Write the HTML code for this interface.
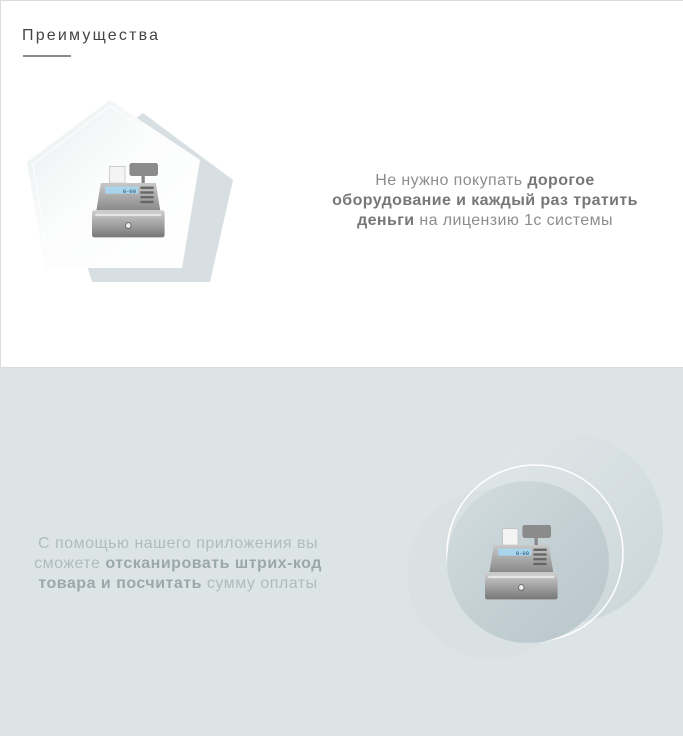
<!DOCTYPE html>
<html><head><meta charset="utf-8"><style>
*{margin:0;padding:0;box-sizing:border-box}
body{width:683px;height:736px;overflow:hidden;font-family:"Liberation Sans","DejaVu Sans",sans-serif;background:#fff;position:relative}
.top{position:absolute;left:0;top:0;width:683px;height:368px;background:#fff;border:1px solid #dcdcdc;border-right:none}
.bot{position:absolute;left:0;top:368px;width:683px;height:368px;background:#dde4e6}
h1{position:absolute;left:22px;top:27px;font-size:16px;font-weight:normal;letter-spacing:2.2px;color:#444}
.line{position:absolute;left:23px;top:55px;width:48px;height:2px;background:#8a8a8a}
.t1{position:absolute;left:290px;width:390px;top:171px;text-align:center;font-size:16px;line-height:20px;color:#8d8d8d;letter-spacing:.4px}
.t1 b{color:#777}
.t2{position:absolute;left:0;width:356px;top:534px;text-align:center;font-size:16px;line-height:20px;color:#b0bbbe;letter-spacing:.5px}
.t2 b{color:#9aa8ac}
svg{position:absolute;left:0;top:0}
</style></head><body>
<div class="top"></div>
<div class="bot"></div>
<svg width="683" height="736" viewBox="0 0 683 736">
<defs>
<linearGradient id="pf" x1="0" y1="0" x2="1" y2="1"><stop offset="0" stop-color="#e8edef"/><stop offset=".45" stop-color="#fbfcfc"/><stop offset="1" stop-color="#ffffff"/></linearGradient>
<linearGradient id="cf" x1="0" y1="0" x2="1" y2="1"><stop offset="0" stop-color="#d4dde0"/><stop offset=".5" stop-color="#c3d0d4"/><stop offset="1" stop-color="#b8c6cb"/></linearGradient>
<linearGradient id="cb" x1="0" y1="0" x2="1" y2="1"><stop offset="0" stop-color="#e2e8ea"/><stop offset="1" stop-color="#c9d4d7"/></linearGradient>
<linearGradient id="gb" x1="0" y1="0" x2="0" y2="1"><stop offset="0" stop-color="#c8c8c8"/><stop offset="1" stop-color="#8a8a8a"/></linearGradient>
<linearGradient id="gd" x1="0" y1="0" x2="0" y2="1"><stop offset="0" stop-color="#d0d0d0"/><stop offset="1" stop-color="#777"/></linearGradient>
<g id="reg">
<rect x="34" y="0" width="26" height="11" rx="2" fill="#8b8b8b"/>
<rect x="45" y="11" width="3" height="8" fill="#888"/>
<rect x="16" y="3" width="14" height="14" fill="#f4f4f4" stroke="#bbb" stroke-width=".6"/>
<path d="M8 17 H58 L62 40 H4 Z" fill="url(#gb)"/>
<rect x="12" y="20" width="30" height="6" fill="#a8d4ec"/>
<text x="40" y="25.5" font-size="5" text-anchor="end" fill="#246" font-family="Liberation Mono">0-00</text>
<g fill="#666"><rect x="44" y="20" width="12" height="2"/><rect x="44" y="24" width="12" height="2"/><rect x="44" y="28" width="12" height="2"/><rect x="44" y="32" width="12" height="2"/></g>
<rect x="0" y="40" width="66" height="23" rx="2" fill="url(#gd)"/>
<rect x="3" y="43" width="60" height="2" fill="#e5e5e5"/>
<circle cx="33" cy="53" r="2.5" fill="#eee" stroke="#666" stroke-width=".8"/>
</g>
</defs>
<polygon points="143,113 233,180 210,282 92,282 60,177" fill="#d7dfe2"/>
<polygon points="110,100 200,160 182,268 45,268 27,162" fill="url(#pf)"/>
<polygon points="110,106 193,162 177,262 49,262 33,164" fill="none" stroke="#fff" stroke-width="1.2" opacity=".8"/>
<use href="#reg" transform="translate(92,163) scale(1.1,1.18)"/>
<circle cx="568" cy="528" r="95" fill="url(#cb)" opacity=".9"/>
<circle cx="492" cy="574" r="85" fill="#d8e0e2" opacity=".8"/>
<circle cx="535" cy="553" r="88" fill="none" stroke="#fff" stroke-width="1.5"/>
<circle cx="528" cy="562" r="81" fill="url(#cf)"/>
<use href="#reg" transform="translate(485,525) scale(1.1,1.18)"/>
</svg>
<h1>Преимущества</h1>
<div class="line"></div>
<div class="t1">Не нужно покупать <b>дорогое<br>оборудование и каждый раз тратить<br>деньги</b> на лицензию 1с системы</div>
<div class="t2">С помощью нашего приложения вы<br>сможете <b>отсканировать штрих-код<br>товара и посчитать</b> сумму оплаты</div>
</body></html>
